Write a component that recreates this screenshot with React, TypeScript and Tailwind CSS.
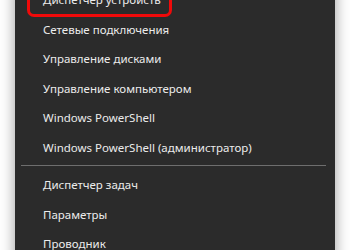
const top = [
  "Диспетчер устройств",
  "Сетевые подключения",
  "Управление дисками",
  "Управление компьютером",
  "Windows PowerShell",
  "Windows PowerShell (администратор)",
];

const bottom = ["Диспетчер задач", "Параметры", "Проводник"];

function Item({ label }: { label: string }) {
  return (
    <div className="flex h-[29.5px] items-center pl-[28px] text-[11.5px] leading-none text-[#ececec]">
      {label}
    </div>
  );
}

export default function App() {
  return (
    <div
      className="h-[250px] w-[350px] overflow-hidden bg-white"
      style={{ fontFamily: '"Noto Sans", "Open Sans", sans-serif' }}
    >
      <div className="mx-[15px] h-[280px] bg-[#2b2b2b] shadow-[0_0_14px_rgba(0,0,0,0.4)]">
        <div className="relative mt-[-15px]">
          <div className="pointer-events-none absolute left-[12px] top-[-12px] h-[44px] w-[145px] rounded-[7px] border-[3px] border-[#f00a0a]" />
          {top.map((t) => (
            <Item key={t} label={t} />
          ))}
          <div className="ml-[6px] mr-[9px] mt-[3px] mb-[4px] h-px bg-[#6e6e6e]" />
          {bottom.map((t) => (
            <Item key={t} label={t} />
          ))}
        </div>
      </div>
    </div>
  );
}
